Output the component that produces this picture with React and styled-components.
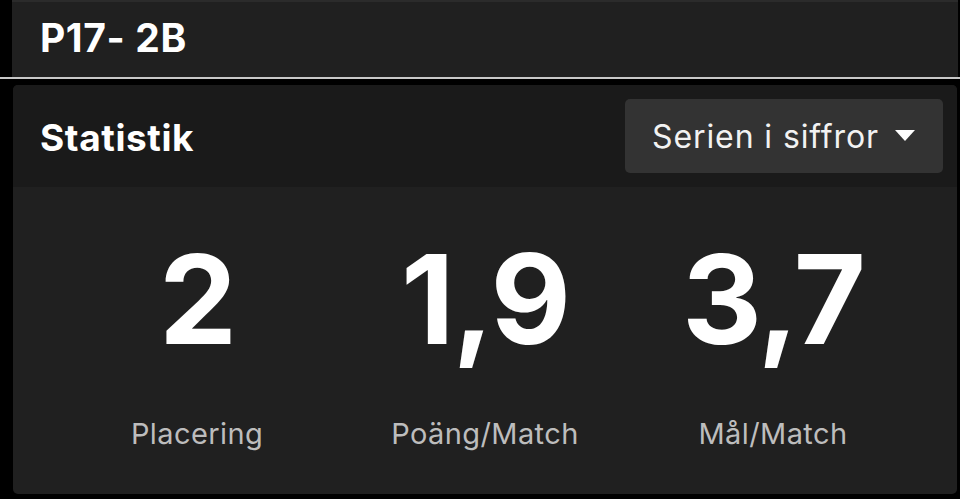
import React from 'react';
import styled, { createGlobalStyle } from 'styled-components';

const Global = createGlobalStyle`
  html, body {
    margin: 0;
    padding: 0;
    background: #000;
  }
  body {
    font-family: Inter, "Noto Sans", sans-serif;
    color: #fff;
  }
`;

const stats = [
  { value: '2', label: 'Placering' },
  { value: '1,9', label: 'Poäng/Match' },
  { value: '3,7', label: 'Mål/Match' },
];

const App = () => {
  return (
    <Page>
      <Global />
      <TopBar>
        <Title>P17- 2B</Title>
      </TopBar>
      <Divider />
      <Card>
        <CardHead>
          <HeadTitle>Statistik</HeadTitle>
          <Select>
            <span>Serien i siffror</span>
            <Caret viewBox="0 0 20 12">
              <path d="M0 0 H20 L10 11 Z" fill="#fff" />
            </Caret>
          </Select>
        </CardHead>
        <StatGrid>
          {stats.map(s => (
            <Stat key={s.label}>
              <Value>{s.value}</Value>
              <Label>{s.label}</Label>
            </Stat>
          ))}
        </StatGrid>
      </Card>
    </Page>
  );
};

export default App;

const Page = styled.div`
  width: 960px;
  height: 499px;
  background: #000;
  overflow: hidden;
`;

const TopBar = styled.header`
  margin-left: 12px;
  margin-right: 2px;
  height: 75px;
  border-top: 2px solid #2b2b2b;
  background: #202020;
  display: flex;
  align-items: center;
  padding-left: 28px;
`;

const Title = styled.h1`
  margin: 0 0 4px;
  font-size: 39px;
  font-weight: 700;
  letter-spacing: 0.6px;
`;

const Divider = styled.div`
  height: 2px;
  background: #c9c9c9;
  margin-bottom: 6px;
`;

const Card = styled.section`
  margin-left: 13px;
  width: 944px;
  height: 409px;
  border-radius: 5px;
  overflow: hidden;
  background: #202020;
  display: flex;
  flex-direction: column;
`;

const CardHead = styled.div`
  height: 102px;
  background: #1a1a1a;
  display: flex;
  align-items: center;
  justify-content: space-between;
  padding: 0 14px 0 27px;
`;

const HeadTitle = styled.h2`
  margin: 0;
  font-size: 37px;
  font-weight: 700;
  letter-spacing: 0.6px;
  padding-top: 2px;
`;

const Select = styled.div`
  width: 318px;
  height: 74px;
  box-sizing: border-box;
  padding: 0 28px 0 27px;
  border-radius: 5px;
  background: #333;
  display: flex;
  align-items: center;
  justify-content: space-between;
  font-size: 32px;
  font-weight: 400;
  letter-spacing: 0.9px;
  color: #f2f2f2;
`;

const Caret = styled.svg`
  width: 20px;
  height: 12px;
`;

const StatGrid = styled.div`
  flex: 1;
  display: grid;
  grid-template-columns: repeat(3, 1fr);
  padding: 0 40px;
`;

const Stat = styled.div`
  display: flex;
  flex-direction: column;
  align-items: center;
  padding-top: 40px;
`;

const Value = styled.div`
  font-size: 124px;
  font-weight: 700;
  line-height: 145px;
  letter-spacing: -2px;
`;

const Label = styled.div`
  margin-top: 44px;
  font-size: 29px;
  letter-spacing: 0.4px;
  color: #bdbdbd;
`;
